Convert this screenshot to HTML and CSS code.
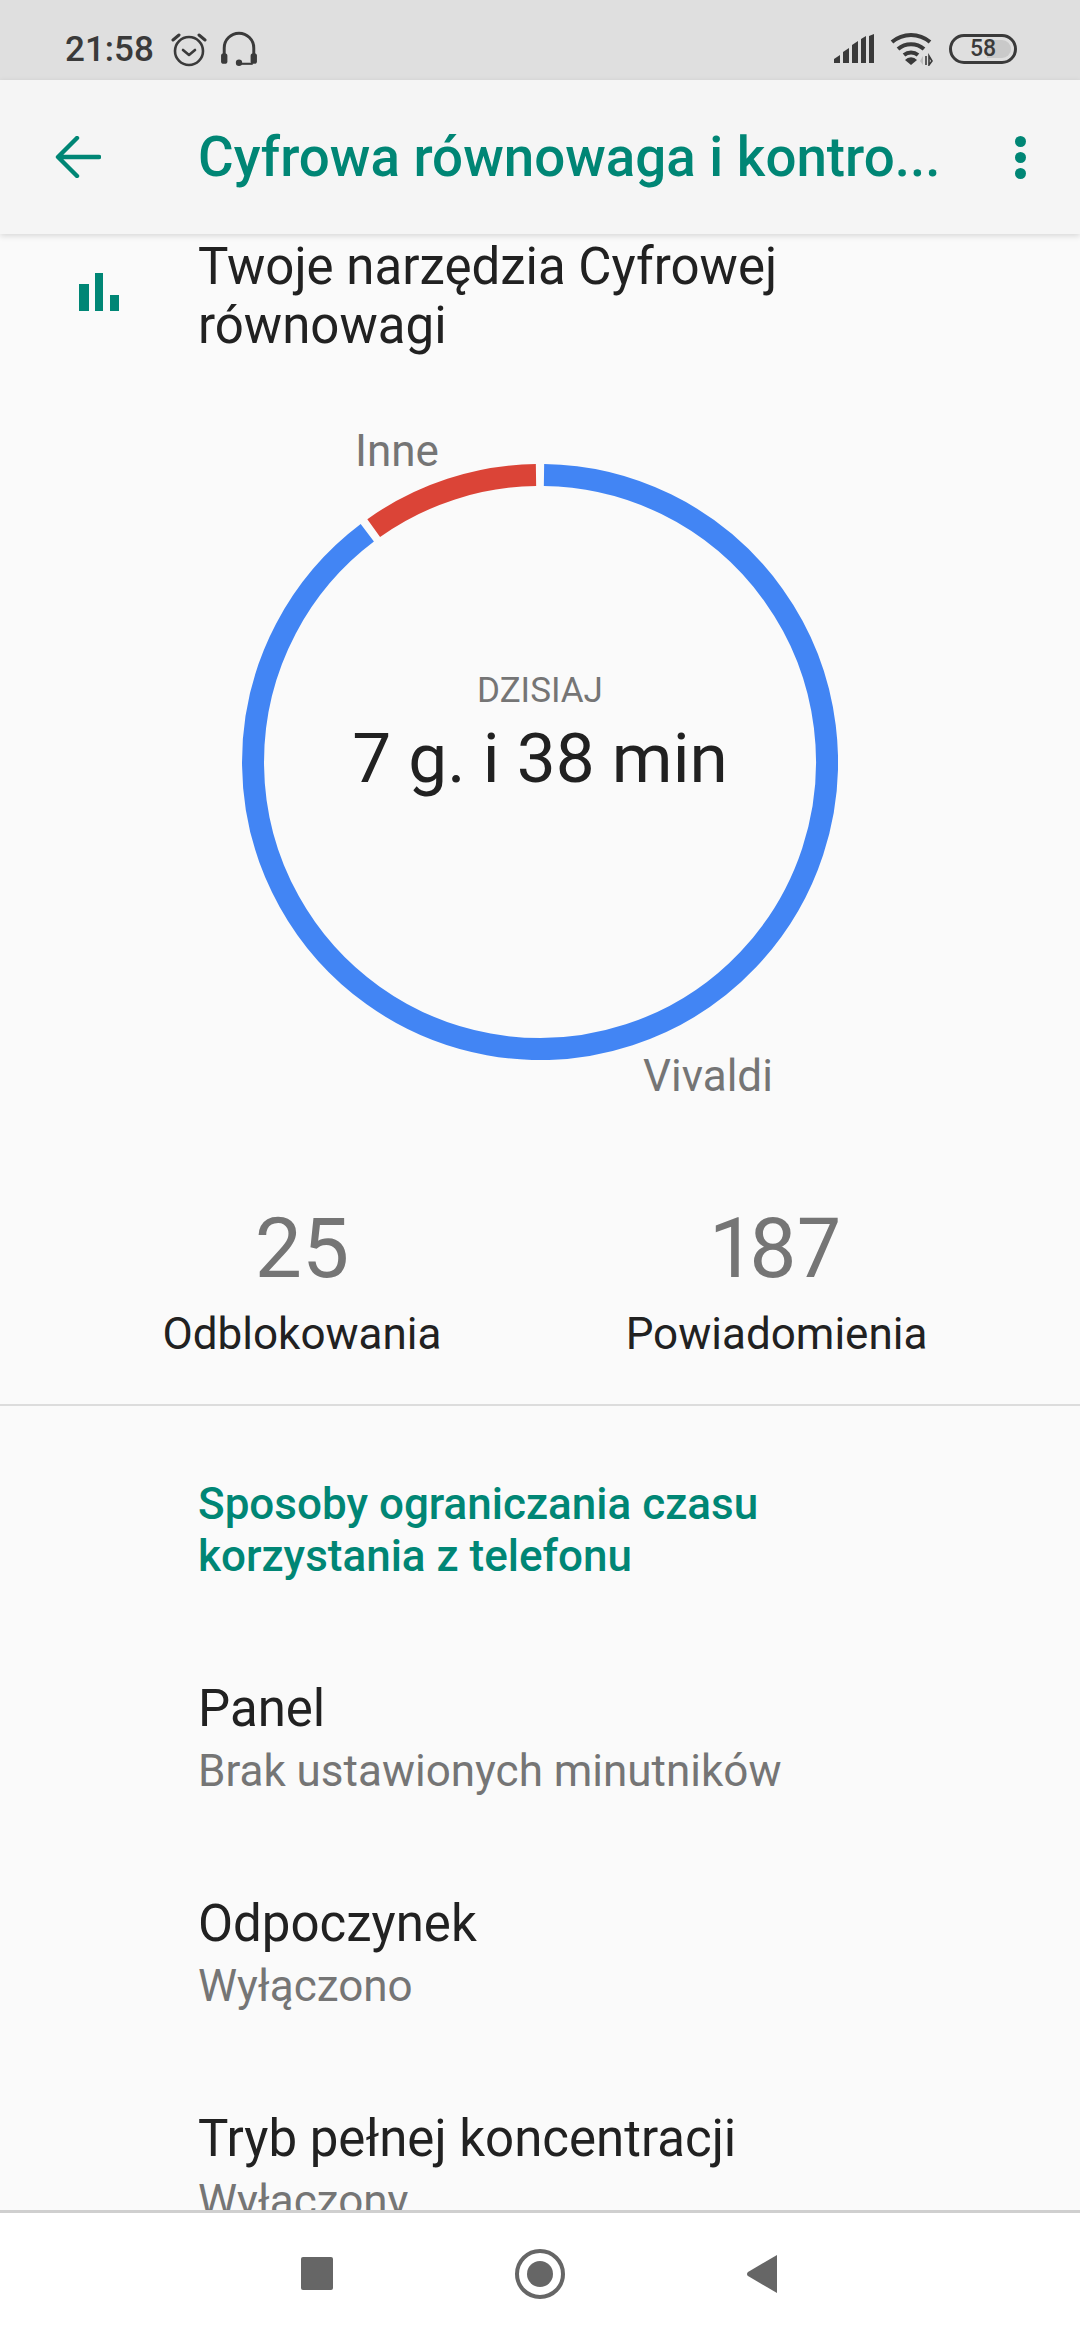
FILE: index.html
```html
<!DOCTYPE html>
<html lang="pl">
<head>
    <meta charset="UTF-8">
    <meta name="viewport" content="width=device-width, initial-scale=1.0">
    <title>Cyfrowa równowaga i kontrola rodzicielska</title>
    <link rel="stylesheet" href="styles.css">
</head>
<body>

<div class="status-bar">
    <div class="status-left">
        <span class="clock">21:58</span>
        <svg class="alarm-icon" viewBox="0 0 36 36" width="36" height="36">
            <circle cx="18" cy="20" r="14" fill="none" stroke="#3a3a3a" stroke-width="2.6"/>
            <path d="M12 19l6 5 6-5" fill="none" stroke="#3a3a3a" stroke-width="2.6" stroke-linecap="round" stroke-linejoin="round"/>
            <path d="M2 9l6-5M34 9l-6-5" fill="none" stroke="#3a3a3a" stroke-width="3" stroke-linecap="round"/>
        </svg>
        <svg class="headset-icon" viewBox="0 0 36 36" width="38" height="38">
            <path d="M4 24V17a14 14 0 0 1 28 0v7" fill="none" stroke="#3a3a3a" stroke-width="2.8"/>
            <rect x="1" y="22" width="6" height="10" rx="2.5" fill="#3a3a3a"/>
            <rect x="29" y="22" width="6" height="10" rx="2.5" fill="#3a3a3a"/>
            <circle cx="18" cy="31" r="3" fill="#3a3a3a"/>
            <path d="M18 32h13" stroke="#3a3a3a" stroke-width="2"/>
        </svg>
    </div>
    <div class="status-right">
        <svg viewBox="0 0 42 30" width="42" height="30">
            <path d="M1 29v-4l6-4v8zM10 29V18l6-4v15zM19 29V11l6-4v22zM28 29V5l5-3v27zM36 29V2l5-2v29z" fill="#3a3a3a"/>
        </svg>
        <svg viewBox="0 0 44 34" width="44" height="34">
            <path d="M2 10a29 29 0 0 1 38 0M8 17a20 20 0 0 1 26 0M14 23a11 11 0 0 1 14 0" fill="none" stroke="#3a3a3a" stroke-width="4"/>
            <path d="M21 33l-6-5a8 8 0 0 1 12 0z" fill="#3a3a3a"/>
            <path d="M36 24v9M39 24v9l3-4z" fill="none" stroke="#3a3a3a" stroke-width="1.6"/>
            <path d="M33 33v-9l-3 5z" fill="#bdbdbd"/>
        </svg>
        <div class="battery">
            <div class="battery-level"></div>
            <span class="battery-text">58</span>
        </div>
    </div>
</div>

<header class="toolbar">
    <svg class="back-icon" viewBox="0 0 46 42" width="46" height="42">
        <path d="M44 21H4M22 2L3 21l19 19" fill="none" stroke="#008675" stroke-width="4.4" stroke-linecap="round" stroke-linejoin="round"/>
    </svg>
    <h1 class="title">Cyfrowa równowaga i kontro...</h1>
    <div class="overflow-dots">
        <span></span><span></span><span></span>
    </div>
</header>

<main class="content">
    <div class="tools-row">
        <svg class="bars-icon" viewBox="0 0 40 38" width="40" height="38">
            <path d="M0 11h10v27H0zM16 0h8v38h-8zM31 22h9v16h-9z" fill="#008675"/>
        </svg>
        <div class="tools-text">Twoje narzędzia Cyfrowej równowagi</div>
    </div>

    <div class="chart">
        <svg class="ring" viewBox="0 0 596 596" width="596" height="596">
            <!-- both arcs stop 4px short of each seam, so an 8px gap is left -->
            <path d="M302 11.030A287 287 0 1 1 125.300 68.800" fill="none" stroke="#4285f4" stroke-width="22"/>
            <path d="M131.700 64.100A287 287 0 0 1 294 11.030" fill="none" stroke="#db4437" stroke-width="22"/>
        </svg>
        <span class="slice-label slice-other">Inne</span>
        <span class="slice-label slice-main">Vivaldi</span>
        <div class="chart-center">
            <div class="chart-day">DZISIAJ</div>
            <div class="chart-total">7 g. i 38 min</div>
        </div>
    </div>

    <div class="stats">
        <div class="stat">
            <div class="stat-value">25</div>
            <div class="stat-name">Odblokowania</div>
        </div>
        <div class="stat">
            <div class="stat-value">187</div>
            <div class="stat-name">Powiadomienia</div>
        </div>
    </div>

    <section class="limits">
        <h2 class="limits-title">Sposoby ograniczania czasu korzystania z telefonu</h2>
        <div class="pref">
            <div class="pref-name">Panel</div>
            <div class="pref-state">Brak ustawionych minutników</div>
        </div>
        <div class="pref">
            <div class="pref-name">Odpoczynek</div>
            <div class="pref-state">Wyłączono</div>
        </div>
        <div class="pref">
            <div class="pref-name">Tryb pełnej koncentracji</div>
            <div class="pref-state">Wyłączony</div>
        </div>
    </section>
</main>

<nav class="nav-bar">
    <div class="nav-square"></div>
    <div class="nav-circle"><div class="nav-dot"></div></div>
    <svg viewBox="0 0 30 38" width="30" height="38">
        <path d="M30 0v38L1 21a2.500 2.500 0 0 1 0-4z" fill="#666"/>
    </svg>
</nav>

</body>
</html>
```

FILE: styles.css
```css
* {
    margin: 0;
    padding: 0;
    box-sizing: border-box;
}

body {
    width: 1080px;
    height: 2340px;
    display: flex;
    flex-direction: column;
    overflow: hidden;
    background: #fafafa;
    font-family: Roboto, sans-serif;
    color: #212121;
}

.status-bar {
    height: 80px;
    flex: none;
    display: flex;
    justify-content: space-between;
    align-items: center;
    padding: 18px 63px 0 65px;
    background: #dfdfdf;
    color: #3a3a3a;
}

.status-left,
.status-right {
    display: flex;
    align-items: center;
}

.clock {
    font-size: 35px;
    font-weight: 500;
    margin-right: 17px;
}

.headset-icon {
    margin-left: 13px;
}

.status-right {
    gap: 15px;
}

.battery {
    position: relative;
    width: 68px;
    height: 30px;
    padding: 3px;
    border: 3px solid #3a3a3a;
    border-radius: 15px;
    overflow: hidden;
}

.battery-level {
    height: 100%;
    margin-left: auto;
    width: 42%;
    background: #c9c9c9;
    border-radius: 0 10px 10px 0;
}

.battery-text {
    position: absolute;
    inset: 0;
    text-align: center;
    font-size: 23px;
    line-height: 24px;
    font-weight: 500;
}

.toolbar {
    height: 154px;
    flex: none;
    position: relative;
    z-index: 1;
    display: flex;
    align-items: center;
    padding: 0 54px 0 55px;
    background: #f5f5f5;
    box-shadow: 0 2px 6px rgba(0, 0, 0, 0.14);
}

.title {
    margin-left: 97px;
    flex: 1;
    font-size: 54.7px;
    font-weight: 500;
    color: #008675;
    white-space: nowrap;
}

.overflow-dots {
    display: flex;
    flex-direction: column;
    gap: 5px;
}

.overflow-dots span {
    width: 11px;
    height: 11px;
    border-radius: 50%;
    background: #008675;
}

.content {
    flex: 1;
    min-height: 0;
    overflow: hidden;
}

.tools-row {
    display: flex;
    padding: 3px 120px 0 79px;
}

.bars-icon {
    flex: none;
    margin-top: 36px;
}

.tools-text {
    margin-left: 79px;
    font-size: 51px;
    line-height: 59px;
}

.chart {
    position: relative;
    width: 596px;
    height: 596px;
    margin: 109px auto 0;
}

.ring {
    display: block;
}

.slice-label {
    position: absolute;
    font-size: 44px;
    line-height: 48px;
    color: #757575;
}

.slice-other {
    left: 113px;
    top: -37px;
}

.slice-main {
    left: 401px;
    top: 588px;
}

.chart-center {
    position: absolute;
    inset: 0;
    display: flex;
    flex-direction: column;
    align-items: center;
    justify-content: center;
    padding-bottom: 50px;
}

.chart-day {
    font-size: 35px;
    line-height: 36px;
    color: #757575;
}

.chart-total {
    font-size: 69.3px;
    line-height: 84px;
    margin-top: 8px;
}

.stats {
    display: flex;
    margin-top: 139px;
    padding-bottom: 46px;
    border-bottom: 2px solid #dcdcdc;
}

.stat {
    width: 50%;
    text-align: center;
}

.stat:first-child {
    padding-left: 64px;
}

.stat:last-child {
    padding-right: 67px;
}

.stat-value {
    font-size: 84px;
    line-height: 100px;
    color: #757575;
    font-variant-numeric: proportional-nums;
}

.stat-name {
    font-size: 44px;
    line-height: 48px;
    margin-top: 11px;
}

.limits {
    padding: 72px 120px 0 198px;
}

.limits-title {
    font-size: 44px;
    line-height: 52px;
    font-weight: 500;
    color: #008675;
    margin-bottom: 33px;
}

.pref {
    height: 215px;
    padding-top: 64px;
}

.pref-name {
    font-size: 51px;
    line-height: 59px;
}

.pref-state {
    font-size: 44px;
    line-height: 48px;
    margin-top: 9px;
    color: #757575;
}

.nav-bar {
    height: 130px;
    flex: none;
    display: flex;
    align-items: center;
    justify-content: center;
    gap: 182px;
    padding: 0 2px 6px 0;
    background: #fff;
    border-top: 3px solid #cfcfcf;
}

.nav-square {
    width: 32px;
    height: 33px;
    border-radius: 2px;
    background: #666;
}

.nav-circle {
    width: 50px;
    height: 50px;
    padding: 8px;
    border: 4px solid #666;
    border-radius: 50%;
}

.nav-dot {
    width: 26px;
    height: 26px;
    border-radius: 50%;
    background: #666;
}
```
